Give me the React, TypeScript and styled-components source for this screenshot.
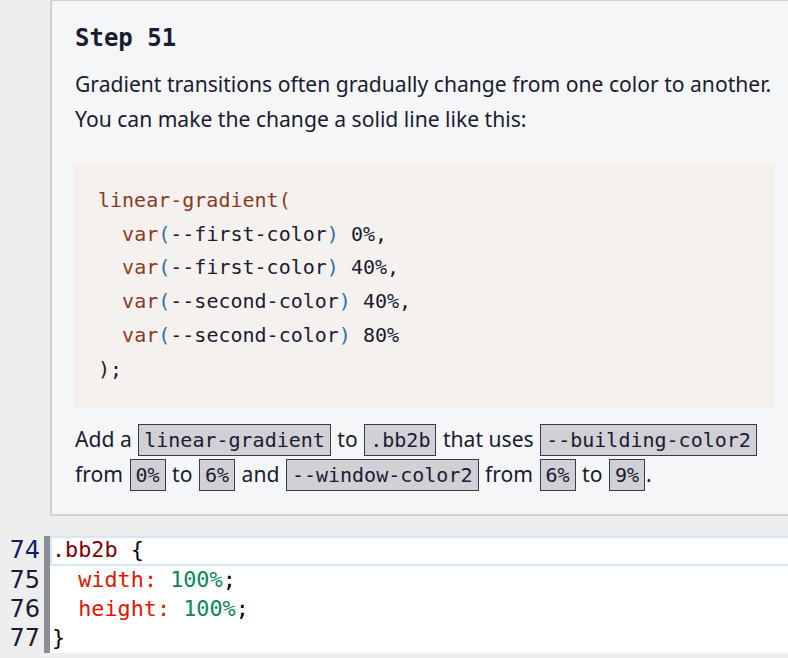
import React from "react";
import styled, { createGlobalStyle } from "styled-components";

const Global = createGlobalStyle`
  html, body { margin: 0; padding: 0; background: #eeeeef; overflow: hidden; }
  body { width: 788px; height: 658px; }
`;

const MONO = `"DejaVu Sans Mono", "Liberation Mono", monospace`;
const SANS = `"Noto Sans", "Open Sans", sans-serif`;

const Page = styled.div`
  width: 788px;
  height: 658px;
  overflow: hidden;
  display: flex;
  flex-direction: column;
`;

const Panel = styled.section`
  margin-left: 50px;
  width: 760px;
  flex: none;
  background: #f5f6f7;
  border-top: 1px solid #d0d0d5;
  border-left: 2px solid #d0d0d5;
  border-bottom: 2px solid #d0d0d5;
  padding: 16px 36px 23px 23px;
  box-sizing: border-box;
  color: #1b1b32;
  font-family: ${SANS};
`;

const Heading = styled.h2`
  margin: 0 0 7px;
  font-family: ${MONO};
  font-weight: 700;
  font-size: 24px;
  line-height: 42px;
  color: #1b1b32;
`;

const Para = styled.p`
  margin: 0;
  font-size: 21.1px;
  line-height: 35px;
  white-space: nowrap;
`;

const CodeBlock = styled.pre`
  margin: 27px 0 12px -1px;
  padding: 21px 24px 23px;
  background: #f5f1ef;
  font-family: ${MONO};
  font-size: 20px;
  line-height: 33.7px;
  color: #1b1b32;
`;

const Tok = styled.span<{ $c: string }>`
  color: ${(p) => p.$c};
`;

const Inline = styled.code`
  font-family: ${MONO};
  font-size: 20px;
  line-height: 1;
  background: #d0d0d5;
  border: 1px solid #3b3b4f;
  padding: 3px 5px;
  margin: 0 1px;
  color: #1b1b32;
`;

const Editor = styled.div`
  margin-top: 20px;
  display: flex;
  flex-direction: column;
`;

const Line = styled.div`
  display: flex;
  height: 29.3px;
`;

const Num = styled.div<{ $active?: boolean }>`
  width: 40px;
  padding-right: 4px;
  text-align: right;
  font-family: "DejaVu Sans", "Noto Sans", sans-serif;
  font-size: 24px;
  line-height: 29.3px;
  color: ${(p) => (p.$active ? "#0b216f" : "#1b1b32")};
`;

const Bar = styled.div`
  width: 6px;
  background: #8d8d96;
`;

const Code = styled.div<{ $active?: boolean }>`
  flex: 1;
  background: #ffffff;
  box-sizing: border-box;
  border: 2px solid ${(p) => (p.$active ? "#d6e8f7" : "transparent")};
  border-right: none;
  font-family: ${MONO};
  font-size: 21.8px;
  line-height: 24px;
  white-space: pre;
  color: #000000;
`;

const BROWN = "#8b3a1f";
const BLUE = "#2e6fa7";
const DARK = "#1b1b32";

const V = ({ name, pct, comma }: { name: string; pct: string; comma: boolean }) => (
  <>
    {"  "}
    <Tok $c={BROWN}>var</Tok>
    <Tok $c={BLUE}>(</Tok>
    <Tok $c={DARK}>{name}</Tok>
    <Tok $c={BLUE}>)</Tok> {pct}
    {comma ? "," : ""}
    {"\n"}
  </>
);

export default function App() {
  return (
    <Page>
      <Global />
      <Panel>
        <Heading>Step 51</Heading>
        <Para>
          Gradient transitions often gradually change from one color to another.
          <br />
          You can make the change a solid line like this:
        </Para>
        <CodeBlock>
          <Tok $c={BROWN}>linear-gradient</Tok>
          <Tok $c={BROWN}>(</Tok>
          {"\n"}
          <V name="--first-color" pct="0%" comma />
          <V name="--first-color" pct="40%" comma />
          <V name="--second-color" pct="40%" comma />
          <V name="--second-color" pct="80%" comma={false} />
          <Tok $c={DARK}>);</Tok>
        </CodeBlock>
        <Para>
          Add a <Inline>linear-gradient</Inline> to <Inline>.bb2b</Inline> that uses{" "}
          <Inline>--building-color2</Inline>
          <br />
          from <Inline>0%</Inline> to <Inline>6%</Inline> and <Inline>--window-color2</Inline> from{" "}
          <Inline>6%</Inline> to <Inline>9%</Inline>.
        </Para>
      </Panel>
      <Editor>
        <Line>
          <Num $active>74</Num>
          <Bar />
          <Code $active>
            <Tok $c="#800000">.bb2b</Tok> {"{"}
          </Code>
        </Line>
        <Line>
          <Num>75</Num>
          <Bar />
          <Code>
            {"  "}
            <Tok $c="#e51400">width</Tok>
            <Tok $c="#e51400">:</Tok> <Tok $c="#098658">100%</Tok>;
          </Code>
        </Line>
        <Line>
          <Num>76</Num>
          <Bar />
          <Code>
            {"  "}
            <Tok $c="#e51400">height</Tok>
            <Tok $c="#e51400">:</Tok> <Tok $c="#098658">100%</Tok>;
          </Code>
        </Line>
        <Line>
          <Num>77</Num>
          <Bar />
          <Code>{"}"}</Code>
        </Line>
      </Editor>
    </Page>
  );
}
